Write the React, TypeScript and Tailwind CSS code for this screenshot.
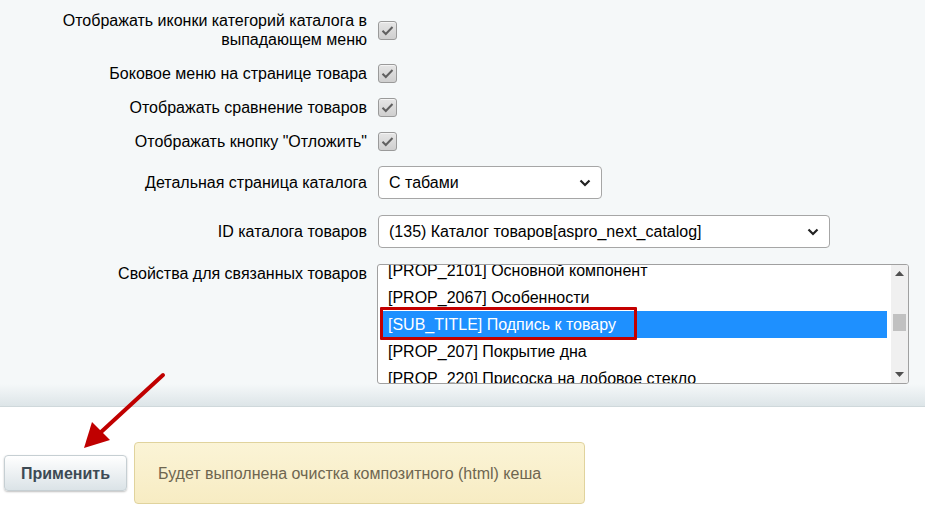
import React from "react";

const checks = [
  ["Отображать иконки категорий каталога в", "выпадающем меню"],
  ["Боковое меню на странице товара"],
  ["Отображать сравнение товаров"],
  ['Отображать кнопку "Отложить"'],
];

const props = [
  "[PROP_2101] Основной компонент",
  "[PROP_2067] Особенности",
  "[SUB_TITLE] Подпись к товару",
  "[PROP_207] Покрытие дна",
  "[PROP_220] Присоска на лобовое стекло",
];

const Checkbox = () => (
  <span className="flex h-[19px] w-[19px] items-center justify-center rounded-[3px] border border-[#9a9a9a] bg-gradient-to-b from-[#e6e6e6] to-[#cfcfcf] shadow-[inset_0_1px_0_#f4f4f4]">
    <svg width="13" height="11" viewBox="0 0 13 11">
      <path d="M1.5 5.8 L4.8 9 L11.5 2" fill="none" stroke="#606060" strokeWidth="2" />
    </svg>
  </span>
);

const Chevron = () => (
  <svg width="12" height="8" viewBox="0 0 12 8">
    <path d="M1.5 1.5 L6 6 L10.5 1.5" fill="none" stroke="#222" strokeWidth="2.2" />
  </svg>
);

const Select = ({ value, width }: { value: string; width: string }) => (
  <div
    className={`flex h-[33px] items-center justify-between rounded-[4px] border border-[#a6a6a6] bg-white pl-[10px] pr-[10px] text-black ${width}`}
  >
    <span>{value}</span>
    <Chevron />
  </div>
);

export default function App() {
  return (
    <div className="relative h-[528px] w-[925px] overflow-hidden bg-white font-['Liberation_Sans',Arial,sans-serif] text-[16px] leading-[19px] text-black">
      <div className="bg-[#f5f8f9] pt-[4px]">
        <div className="grid grid-cols-[367px_1fr] gap-x-[11px]">
          {checks.map((lines, i) => (
            <React.Fragment key={i}>
              <div className={`flex flex-col items-end justify-center text-right ${i === 0 ? "h-[52px]" : "h-[34px]"}`}>
                {lines.map((l) => (
                  <span key={l} className="whitespace-nowrap">{l}</span>
                ))}
              </div>
              <div className="flex items-center">
                <Checkbox />
              </div>
            </React.Fragment>
          ))}

          <div className="flex h-[49px] items-center justify-end">Детальная страница каталога</div>
          <div className="flex items-center">
            <Select value="С табами" width="w-[224px]" />
          </div>

          <div className="flex h-[49px] items-center justify-end">ID каталога товаров</div>
          <div className="flex items-center">
            <Select value="(135) Каталог товаров[aspro_next_catalog]" width="w-[452px]" />
          </div>

          <div className="pt-[8px] text-right">Свойства для связанных товаров</div>
          <div className="pt-[8px]">
            <div className="-ml-px flex h-[120px] w-[532px] overflow-hidden rounded-[3px] border border-[#a0a0a0] bg-white">
              <div className="flex-1 overflow-hidden pl-[2px] pr-[4px]">
                <div className="-mt-[8px]">
                  {props.map((p, i) => (
                    <div
                      key={p}
                      className={`relative flex h-[27px] items-center pl-[8px] ${i === 2 ? "bg-[#1e90ff] text-white" : ""}`}
                    >
                      {p}
                      {i === 2 && (
                        <span className="absolute -top-[4px] left-0 h-[33px] w-[257px] rounded-[1px] border-[3px] border-[#c40000]" />
                      )}
                    </div>
                  ))}
                </div>
              </div>
              <div className="flex w-[17px] flex-col items-center justify-between bg-[#f0f0f0] py-[6px]">
                <svg width="9" height="5" viewBox="0 0 9 5">
                  <path d="M0 5 L4.5 0 L9 5 Z" fill="#505050" />
                </svg>
                <div className="-mt-[3px] h-[17px] w-[13px] bg-[#c1c1c1]" />
                <svg width="9" height="5" viewBox="0 0 9 5">
                  <path d="M0 0 L4.5 5 L9 0 Z" fill="#505050" />
                </svg>
              </div>
            </div>
          </div>
        </div>
        <div className="h-[23px] border-b border-[#cfd8db] bg-gradient-to-b from-[#f5f8f9] to-[#dde5e8]" />
      </div>

      <div className="flex items-center gap-[7px] pl-[4px] pt-[35px]">
        <button className="h-[36px] w-[123px] rounded-[4px] border border-[#c6cfd3] bg-gradient-to-b from-white to-[#dbe3e7] text-[16px] font-bold text-[#3d4a54] shadow-[0_1px_2px_rgba(0,0,0,0.25)]">
          Применить
        </button>
        <div className="flex h-[62px] w-[451px] items-center rounded-[4px] border border-[#e0d39d] bg-gradient-to-b from-[#fbf4d6] to-[#f7ecc3] pl-[23px] text-[#6e6650]">
          Будет выполнена очистка композитного (html) кеша
        </div>
      </div>

      <svg className="pointer-events-none absolute left-0 top-0" width="925" height="528" viewBox="0 0 925 528">
        <line x1="163" y1="375" x2="100" y2="433" stroke="#c00000" strokeWidth="4" strokeLinecap="round" />
        <path d="M84 448 L92 422 L110 440 Z" fill="#c00000" />
      </svg>
    </div>
  );
}
